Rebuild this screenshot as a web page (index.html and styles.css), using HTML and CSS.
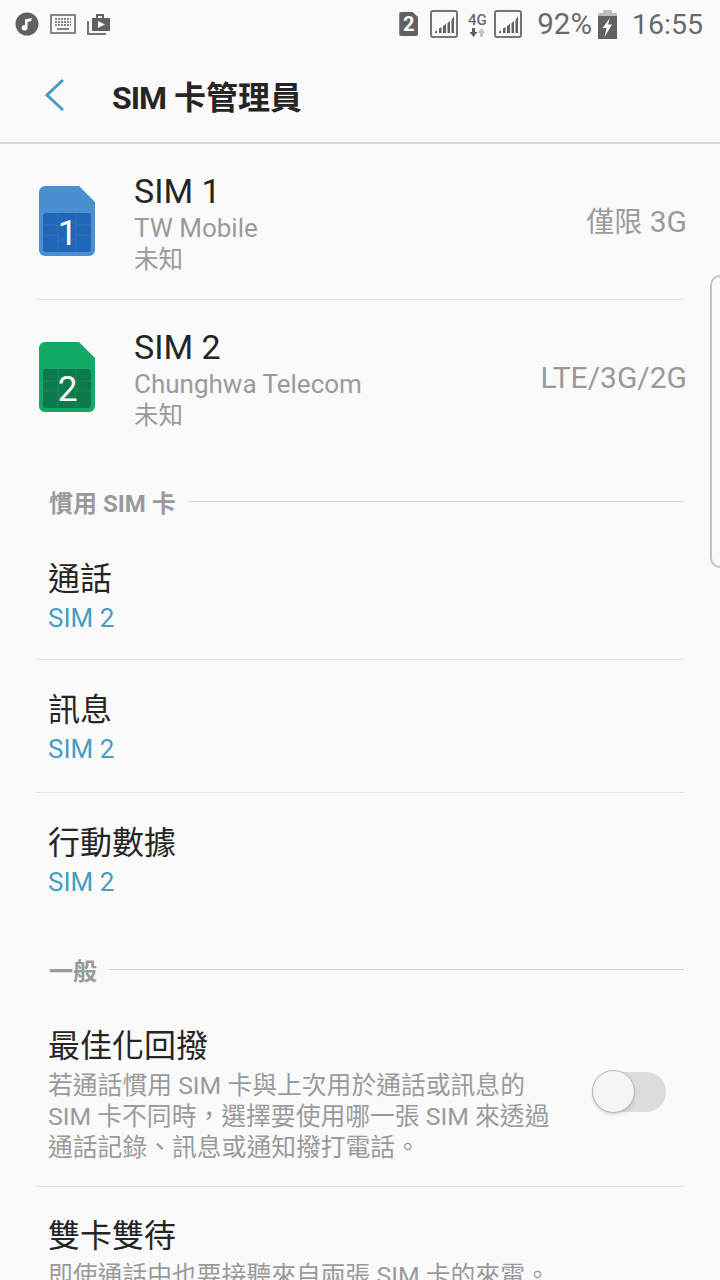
FILE: index.html
```html
<!DOCTYPE html>
<html lang="zh-Hant">
<head>
    <meta charset="UTF-8">
    <meta name="viewport" content="width=device-width, initial-scale=1.0">
    <title>SIM 卡管理員</title>
    <link rel="stylesheet" href="styles.css">
</head>
<body>
    <div class="statusbar">
        <div class="status-left">
            <svg width="24" height="24" viewBox="0 0 24 24"><circle cx="12" cy="12" r="11.500" fill="#616161"/><path d="M10 7.500 L16.500 6 V9 L12.600 9.900 V15.500 A3 2.700 0 1 1 10 13 Z" fill="#fafafa"/></svg>
            <svg width="26" height="20" viewBox="0 0 26 20"><rect x="1" y="1" width="24" height="18" fill="none" stroke="#858585" stroke-width="2"/><path d="M5 5h16M5 8h16M5 11h16" stroke="#858585" stroke-width="2" stroke-dasharray="2 1"/><path d="M7 15h12" stroke="#858585" stroke-width="2"/></svg>
            <svg width="24" height="24" viewBox="0 0 24 24"><path d="M1 9 V22 H19" fill="none" stroke="#757575" stroke-width="2"/><path d="M5 6 H9 V2 H17 V6 H23 V19 H5 Z" fill="#616161"/><path d="M11 4 H15 V6 H11 Z" fill="#fafafa"/><path d="M11 9 L18 12.500 L11 16 Z" fill="#fafafa"/></svg>
        </div>
        <div class="status-right">
            <span class="sim-badge">2</span>
            <svg class="signal" width="29" height="28" viewBox="0 0 29 28"><rect x="1" y="1" width="26" height="26" rx="2" fill="none" stroke="#757575" stroke-width="2"/><path d="M5 21.500L7 20.500V23H5zM9 18.500L11.500 17V23H9zM13 16L16 14V23H13zM17.500 13L20 11V23H17.500zM21.500 10L24 6V23H21.500z" fill="#616161"/></svg>
            <span class="net">
                <span class="net-label">4G</span>
                <svg width="17" height="9" viewBox="0 0 17 9"><path d="M3 0h3v4h2.500L4.500 9 0.500 4H3z" fill="#616161"/><path d="M11 9h3V5h2.500L12.500 0 8.500 5H11z" fill="#c4c4c4"/></svg>
            </span>
            <svg class="signal" width="29" height="28" viewBox="0 0 29 28"><rect x="1" y="1" width="26" height="26" rx="2" fill="none" stroke="#757575" stroke-width="2"/><path d="M5 21.500L7 20.500V23H5zM9 18.500L11.500 17V23H9zM13 16L16 14V23H13zM17.500 13L20 11V23H17.500zM21.500 10L24 6V23H21.500z" fill="#616161"/></svg>
            <span class="battery-text">92%</span>
            <svg class="battery" width="19" height="29" viewBox="0 0 19 29"><path d="M5 0h9v4H5z" fill="#bdbdbd"/><path d="M0 3h19v4H0z" fill="#bdbdbd"/><path d="M0 6h19v23H0z" fill="#616161"/><path d="M12 8 L4.500 18 H8.500 L6.500 27 L14 14.500 H10 Z" fill="#fafafa"/></svg>
            <span class="clock">16:55</span>
        </div>
    </div>

    <header class="appbar">
        <svg class="back" width="22" height="34" viewBox="0 0 22 34"><path d="M19 2 L3 17 L19 32" fill="none" stroke="#479cc2" stroke-width="3"/></svg>
        <h1><span class="latin">SIM</span> 卡管理員</h1>
    </header>

    <main>
        <section class="sim-list">
            <div class="sim-row">
                <div class="sim-icon">
                    <svg width="58" height="70" viewBox="0 0 58 70"><path d="M7 0 H41 L57 16 V64 A6 6 0 0 1 51 70 H7 A6 6 0 0 1 1 64 V6 A6 6 0 0 1 7 0 Z" fill="#4a8fd0"/><rect x="5" y="27" width="48" height="39" rx="3" fill="#2067b8"/><path d="M20 27v39M38 27v39M5 39h15M38 39h15M5 49h15M38 49h15M20 36h18M20 54h18" stroke="#3272bf" stroke-width="1"/></svg>
                    <span class="sim-num">1</span>
                </div>
                <div class="sim-info">
                    <div class="sim-name">SIM 1</div>
                    <div class="sim-sub">TW Mobile</div>
                    <div class="sim-sub state">未知</div>
                </div>
                <div class="sim-mode"><span class="cjk">僅限</span> 3G</div>
            </div>
            <div class="sim-row second">
                <div class="sim-icon">
                    <svg width="58" height="70" viewBox="0 0 58 70"><path d="M7 0 H41 L57 16 V64 A6 6 0 0 1 51 70 H7 A6 6 0 0 1 1 64 V6 A6 6 0 0 1 7 0 Z" fill="#12a866"/><rect x="5" y="27" width="48" height="39" rx="3" fill="#0c7a4c"/><path d="M20 27v39M38 27v39M5 39h15M38 39h15M5 49h15M38 49h15M20 36h18M20 54h18" stroke="#1f8758" stroke-width="1"/></svg>
                    <span class="sim-num">2</span>
                </div>
                <div class="sim-info">
                    <div class="sim-name">SIM 2</div>
                    <div class="sim-sub">Chunghwa Telecom</div>
                    <div class="sim-sub state">未知</div>
                </div>
                <div class="sim-mode">LTE/3G/2G</div>
            </div>
        </section>

        <div class="section-head"><span>慣用 SIM 卡</span></div>
        <div class="item first">
            <div class="item-title">通話</div>
            <div class="item-value">SIM 2</div>
        </div>
        <div class="item">
            <div class="item-title">訊息</div>
            <div class="item-value">SIM 2</div>
        </div>
        <div class="item last">
            <div class="item-title">行動數據</div>
            <div class="item-value">SIM 2</div>
        </div>

        <div class="section-head"><span>一般</span></div>
        <div class="item toggle-item">
            <div class="toggle-text">
                <div class="item-title">最佳化回撥</div>
                <div class="item-desc">若通話慣用 SIM 卡與上次用於通話或訊息的 SIM 卡不同時，選擇要使用哪一張 SIM 來透過通話記錄、訊息或通知撥打電話。</div>
            </div>
            <div class="switch"><div class="knob"></div></div>
        </div>
        <div class="item tail">
            <div class="item-title">雙卡雙待</div>
            <div class="item-desc">即使通話中也要接聽來自兩張 SIM 卡的來電。</div>
        </div>
    </main>

    <div class="edge-handle"></div>
</body>
</html>
```

FILE: styles.css
```css
html, body {
    margin: 0;
    height: 1280px;
    overflow: hidden;
}
body {
    position: relative;
    background-color: #fafafa;
    font-family: Roboto, "Noto Sans CJK TC", sans-serif;
    color: #252525;
}
.statusbar {
    height: 48px;
    display: flex;
    justify-content: space-between;
    align-items: center;
    padding: 0 17px 0 15px;
}
.status-left {
    display: flex;
    align-items: center;
    gap: 11px;
}
.status-right {
    display: flex;
    align-items: center;
    color: #6a6a6a;
}
.sim-badge {
    width: 19px;
    height: 24px;
    background-color: #616161;
    color: #fafafa;
    border-radius: 2px;
    clip-path: polygon(0 0, 70% 0, 100% 22%, 100% 100%, 0 100%);
    font-size: 20px;
    font-weight: 700;
    line-height: 25px;
    text-align: center;
    margin-right: 12px;
}
.net {
    width: 20px;
    margin: 0 7px 0 8px;
    display: flex;
    flex-direction: column;
    align-items: center;
}
.net-label {
    font-size: 15px;
    font-weight: 500;
    line-height: 16px;
}
.battery-text {
    font-size: 29.500px;
    margin-left: 14px;
}
.battery {
    margin-left: 6px;
}
.clock {
    font-size: 28.500px;
    margin-left: 15px;
}
.appbar {
    height: 94px;
    display: flex;
    align-items: center;
    border-bottom: 2px solid #d6d6d6;
}
.back {
    margin-left: 44px;
}
.appbar h1 {
    margin: 0 0 0 46px;
    font-size: 32px;
    font-weight: 700;
    color: #252525;
}
.latin {
    letter-spacing: -1px;
}
.sim-list {
    padding: 0 36px;
}
.sim-row {
    display: flex;
    height: 155px;
    border-bottom: 1px solid #e3e3e3;
}
.sim-row.second {
    border-bottom: none;
    height: 179px;
}
.sim-icon {
    position: relative;
    width: 58px;
    height: 70px;
    margin: 42px 0 0 2px;
}
.sim-icon svg {
    display: block;
}
.sim-num {
    position: absolute;
    left: 1px;
    right: 0;
    top: 28px;
    text-align: center;
    color: #fff;
    font-size: 35px;
    line-height: 40px;
}
.sim-info {
    margin: 26px 0 0 38px;
    flex: 1;
}
.sim-name {
    font-size: 34px;
    line-height: 42px;
}
.sim-sub {
    font-size: 26px;
    line-height: 32px;
    color: #9a9a9a;
}
.sim-sub.state {
    font-size: 24.500px;
}
.sim-mode {
    margin: 62px -3px 0 0;
    font-size: 30px;
    line-height: 32px;
    color: #9a9a9a;
}
.cjk {
    font-size: 28px;
}
.section-head {
    display: flex;
    align-items: center;
    margin: 0 36px;
    padding-left: 13px;
    height: 44px;
    font-size: 24px;
    font-weight: 700;
    color: #9a9a9a;
}
.section-head::after {
    content: "";
    flex: 1;
    height: 1px;
    margin-left: 12px;
    background-color: #d6d6d6;
}
.item {
    margin: 0 36px;
    padding: 29px 12px 0;
    height: 133px;
    box-sizing: border-box;
    border-bottom: 1px solid #e3e3e3;
}
.item.first {
    padding-top: 35px;
    height: 137px;
}
.item.last {
    border-bottom: none;
    height: 154px;
}
.item-title {
    font-size: 32px;
    line-height: 42px;
}
.item-value {
    font-size: 26px;
    line-height: 36px;
    color: #479cc2;
}
.item-desc {
    margin-top: 3px;
    font-size: 24.800px;
    line-height: 31px;
    color: #9a9a9a;
}
.toggle-item {
    display: flex;
    height: 196px;
    padding-top: 34px;
}
.toggle-text {
    width: 511px;
}
.switch {
    position: relative;
    width: 74px;
    height: 40px;
    margin: 47px 0 0 33px;
    border-radius: 20px;
    background-color: #dcdcdc;
}
.knob {
    position: absolute;
    left: 0;
    top: -2px;
    width: 43px;
    height: 43px;
    box-sizing: border-box;
    border-radius: 50%;
    background-color: #f5f5f5;
    border: 1px solid #b5b5b5;
    box-shadow: 0 2px 3px rgba(0,0,0,0.12);
}
.item.tail {
    border-bottom: none;
    padding-top: 28px;
}
.edge-handle {
    position: absolute;
    left: 710px;
    top: 275px;
    width: 20px;
    height: 293px;
    box-sizing: border-box;
    border: 2px solid #c4c4c4;
    border-radius: 12px;
}
```
